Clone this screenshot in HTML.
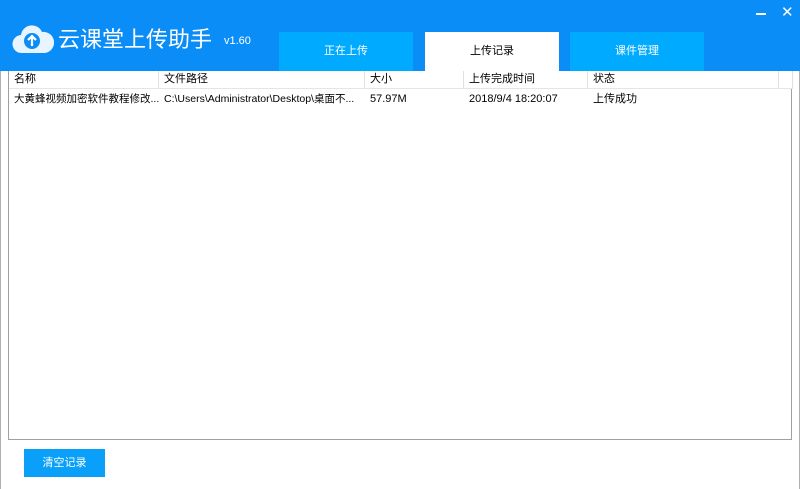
<!DOCTYPE html>
<html><head><meta charset="utf-8"><style>
*{margin:0;padding:0;box-sizing:border-box}
body{width:800px;height:489px;overflow:hidden;background:#fff;font-family:"Liberation Sans","Noto Sans CJK SC",sans-serif;font-size:11px;color:#000;position:relative}
.bl{position:absolute;top:0;width:1px;height:489px;background:#b0b0b0}
.hdr{position:absolute;left:0;top:0;width:800px;height:71px;background:#0a8df7}
.title{position:absolute;left:58px;top:23px;color:#fff;font-size:22px;font-family:"Noto Sans CJK SC",sans-serif;line-height:30px}
.ver{position:absolute;left:224px;top:35px;color:#fff;font-size:11px}
.tab{position:absolute;top:32px;height:39px;width:134px;background:#00aaff;color:#fff;text-align:center;line-height:39px;font-size:11px}
.tab.on{background:#fff;color:#000}
.list{position:absolute;left:8px;top:71px;width:784px;height:369px;border:1px solid #a0a0a0;border-top:none}
.th{position:absolute;top:0;height:18px;line-height:17px;border-right:1px solid #e0e0e0;border-bottom:1px solid #e5e5e5;padding-left:5px;background:#fff}
.td{position:absolute;top:20px;line-height:16px;padding-left:5px;white-space:nowrap;overflow:hidden}
.btn{position:absolute;left:24px;top:449px;width:81px;height:28px;background:#0aa0fa;color:#fff;text-align:center;line-height:28px}
</style></head><body>
<div class="bl" style="left:0"></div><div class="bl" style="left:799px"></div>
<div class="hdr">
<svg style="position:absolute;left:12px;top:22px" width="42" height="32" viewBox="0 0 42 32"><path d="M10 31a9 9 0 0 1-1-18 11 11 0 0 1 21-3 10 10 0 0 1 3 21z" fill="#e8f4ff"/><circle cx="20" cy="19" r="8" fill="#0a8df7"/><path d="M20 24v-9M16 18l4-4 4 4" stroke="#fff" stroke-width="2.2" fill="none"/></svg>
<div class="title">云课堂上传助手</div>
<div class="ver">v1.60</div>
<div style="position:absolute;left:756px;top:13px;width:10px;height:2px;background:#fff"></div>
<div style="position:absolute;left:781px;top:3px;color:#fff;font-size:15px">✕</div>
<div class="tab" style="left:279px">正在上传</div>
<div class="tab on" style="left:425px">上传记录</div>
<div class="tab" style="left:570px">课件管理</div>
</div>
<div class="list">
<div class="th" style="left:0;width:150px">名称</div>
<div class="th" style="left:150px;width:206px">文件路径</div>
<div class="th" style="left:356px;width:99px">大小</div>
<div class="th" style="left:455px;width:124px">上传完成时间</div>
<div class="th" style="left:579px;width:191px">状态</div>
<div class="th" style="left:770px;width:14px;padding:0"></div>
<div class="td" style="left:0;width:150px;font-size:10.5px">大黄蜂视频加密软件教程修改...</div>
<div class="td" style="left:150px;width:206px;font-size:10.5px">C:\Users\Administrator\Desktop\桌面不...</div>
<div class="td" style="left:356px">57.97M</div>
<div class="td" style="left:455px">2018/9/4 18:20:07</div>
<div class="td" style="left:579px">上传成功</div>
</div>
<div class="btn">清空记录</div>
</body></html>
